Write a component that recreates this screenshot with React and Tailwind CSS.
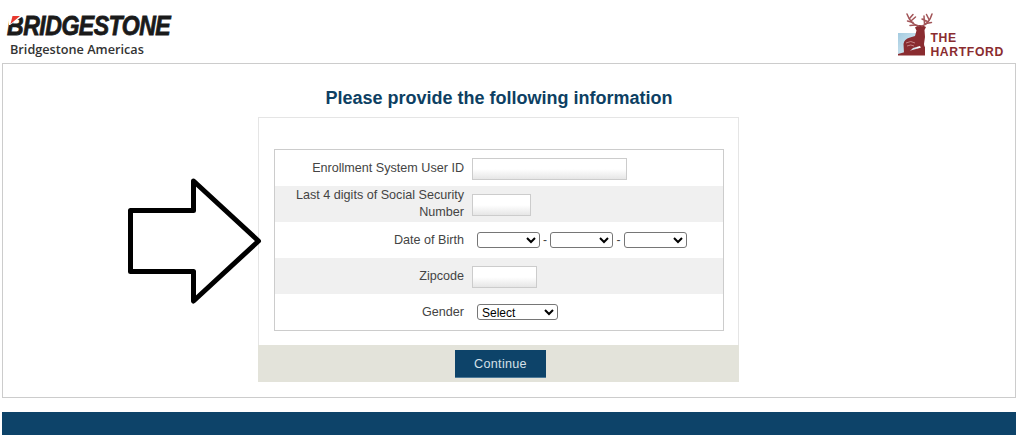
const labelCls = "text-right text-[12.6px] leading-[17px] text-[#444] w-[189px] shrink-0";
const inputCls = "h-[22px] mt-[2px] border border-[#ccc] bg-linear-to-b from-white from-50% to-[#e6e6e6] block";
const selectCls = "h-[16px] pb-[2px] border border-[#767676] rounded-[3px] bg-white text-[12px] leading-[14px] text-black block";

function Row({ label, shaded, children }) {
  return (
    <div className={`flex h-[36px] items-center ${shaded ? "bg-[#f0f0f0]" : "bg-white"}`}>
      <div className={labelCls}>{label}</div>
      {children}
    </div>
  );
}

function Deer() {
  return (
    <svg width="34" height="44" viewBox="896 12 34 44" className="block overflow-visible">
      <defs>
        <linearGradient id="sky" x1="0" y1="0" x2="1" y2="1">
          <stop offset="0" stopColor="#a3cbe0" />
          <stop offset="1" stopColor="#e4f0f6" />
        </linearGradient>
      </defs>
      <rect x="898" y="33" width="19" height="22" fill="url(#sky)" />
      <path d="M898 55.5V54L925 46.5V55.5Z" fill="#8a2c30" />
      <path d="M904 53L903.5 44Q904 39 910 37.5L915 36L916.5 30.5L915 27.5L919 25L923 25.5L926 27L924.5 30L925 37L924 44L925 50H922L920 46L913 48L909 52Z" fill="#8a2c30" />
      <g stroke="#a25558" strokeWidth="1.5" fill="none" strokeLinecap="round">
        <path d="M919 26Q911 25 907 14" />
        <path d="M913 22.5L907.5 21M915.5 25L910 25.5M909.5 18.5L913 14.5M911.5 20.5L915.5 17" />
        <path d="M922 26Q929 24 932 14" />
        <path d="M926 23.5L931.5 22.5M924.5 24L924 16M929 19.5L926.5 14.5M927.5 21.5L922 19" />
      </g>
      <path d="M906 43Q911 40 915 43M907 46Q911 44 914 46" stroke="#c98c8e" strokeWidth="0.9" fill="none" />
    </svg>
  );
}

export default function App() {
  return (
    <div className="relative w-[1018px] h-[439px] bg-white overflow-hidden font-['Liberation_Sans',Arial,sans-serif]">
      <header className="h-[63px] flex justify-between pl-[7px] pr-[14px]">
        <div className="pt-[12px]">
          <div className="relative h-[28px] w-[165px]">
            <span className="block origin-left scale-x-[0.855] font-bold italic text-[27px] leading-[28px] tracking-[-0.6px] text-[#1a1a1a] [-webkit-text-stroke:0.8px_#1a1a1a] whitespace-nowrap">BRIDGESTONE</span>
            <svg width="14" height="10" viewBox="0 0 14 10" className="absolute left-[2px] top-[3px]">
              <path d="M0 0H14V1L1 10H0Z" fill="white" />
              <path d="M3.5 1H11L1.5 9Z" fill="#e8392f" />
            </svg>
          </div>
          <div className="pl-[3px] mt-[1px] text-[12.7px] leading-[16px] font-semibold text-[#333] font-['Open_Sans',sans-serif] whitespace-nowrap">Bridgestone Americas</div>
        </div>
        <div className="flex items-start pt-[12px]">
          <Deer />
          <div className="pt-[19px] font-bold text-[#8a2c30] leading-[14px] text-[12.2px] tracking-[0.65px]">
            <div>THE</div>
            <div>HARTFORD</div>
          </div>
        </div>
      </header>

      <main className="mx-[2px] h-[335px] border border-[#ccc] pt-[23px]">
        <h1 className="text-center text-[18px] leading-[22px] font-bold text-[#0d3f63] pr-[20px]">Please provide the following information</h1>
        <div className="ml-[255px] mt-[8px] w-[481px] h-[265px] border border-[#e5e5e5] flex flex-col">
          <div className="ml-[15px] mt-[31px] w-[450px] h-[182px] border border-[#ccc]">
            <Row label="Enrollment System User ID">
              <input className={`${inputCls} ml-[8px] w-[155px]`} />
            </Row>
            <Row label="Last 4 digits of Social Security Number" shaded>
              <input className={`${inputCls} ml-[8px] w-[59px]`} />
            </Row>
            <Row label="Date of Birth">
              <div className="ml-[13px] flex items-center text-[12px] text-[#444]">
                <select className={`${selectCls} w-[63px]`}><option></option></select>
                <span className="w-[10px] text-center">-</span>
                <select className={`${selectCls} w-[63px]`}><option></option></select>
                <span className="w-[11px] text-center">-</span>
                <select className={`${selectCls} w-[63px]`}><option></option></select>
              </div>
            </Row>
            <Row label="Zipcode" shaded>
              <input className={`${inputCls} ml-[8px] w-[65px]`} />
            </Row>
            <Row label="Gender">
              <select className={`${selectCls} ml-[13px] w-[81px]`}><option>Select</option></select>
            </Row>
          </div>
          <div className="mt-auto h-[37px] bg-[#e3e3da] flex justify-center pt-[5px] mb-[-1px] mx-[-1px]">
            <button className="ml-[4px] h-[28px] w-[91px] pt-[2px] bg-[#0d4369] border-b border-[#4d7a99] text-[#d5e0e8] text-[12.6px] tracking-[0.3px]">Continue</button>
          </div>
        </div>
      </main>

      <footer className="mt-[14px] mx-[2px] h-[23px] bg-[#0d4369]"></footer>

      <svg className="absolute left-[125px] top-[175px]" width="140" height="132" viewBox="125 175 140 132">
        <path d="M130.5 210.5H193.5V181L258.5 241L193.5 301V271.5H130.5Z" fill="white" stroke="black" strokeWidth="5" strokeLinejoin="round" />
      </svg>
    </div>
  );
}
